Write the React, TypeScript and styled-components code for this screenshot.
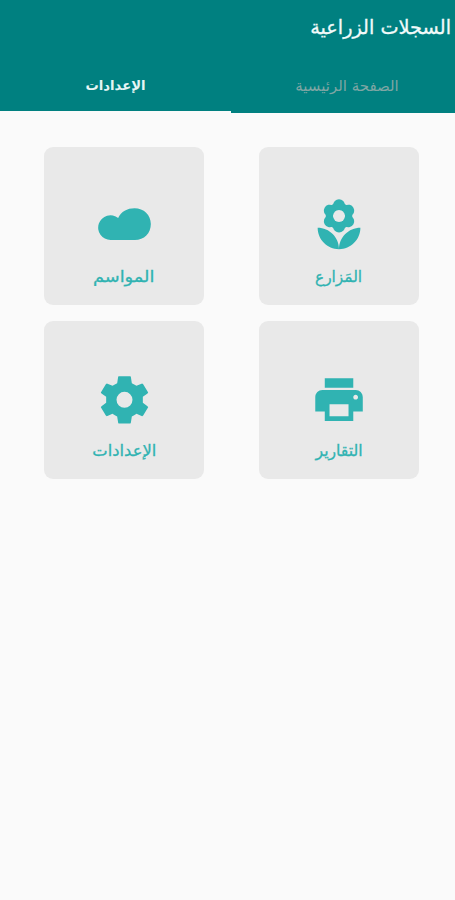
import React from 'react';
import styled, { createGlobalStyle } from 'styled-components';

const GlobalStyle = createGlobalStyle`
  * { box-sizing: border-box; }
  body { margin: 0; background: #fafafa; }
`;

const Page = styled.div`
  min-height: 900px;
  background: #fafafa;
  font-family: 'DejaVu Sans', sans-serif;
`;

const Header = styled.header`
  height: 113px;
  background: #008080;
  display: flex;
  flex-direction: column;
`;

const Title = styled.h1`
  margin: 0;
  height: 60px;
  padding: 0 4px 6px 0;
  display: flex;
  align-items: center;
  font-size: 19.3px;
  font-weight: 400;
  color: #f2fafa;
  -webkit-text-stroke: 0.3px #f2fafa;
  white-space: nowrap;
`;

const Tabs = styled.nav`
  flex: 1;
  display: grid;
  grid-template-columns: 216px 8px 231px;
`;

const Tab = styled.button<{ $active?: boolean }>`
  grid-column: ${p => (p.$active ? 3 : 1)};
  border: 0;
  background: none;
  padding: 0;
  display: flex;
  align-items: center;
  justify-content: center;
  font: ${p => (p.$active ? '700 13.2px' : '400 15px')} 'DejaVu Sans', sans-serif;
  color: ${p => (p.$active ? '#e6f5f5' : '#7fa6a4')};
  border-bottom: 2px solid ${p => (p.$active ? '#fafafa' : 'transparent')};
`;

const Grid = styled.main`
  display: grid;
  grid-template-columns: 160px 160px;
  grid-auto-rows: 158px;
  column-gap: 55px;
  row-gap: 16.5px;
  padding: 33.5px 36px 0 0;
`;

const Card = styled.div`
  background: #e9e9e9;
  border-radius: 9px;
  display: flex;
  flex-direction: column;
  align-items: center;
  color: #30b3b2;
`;

const IconBox = styled.div`
  height: 57px;
  margin-top: 49.5px;
  display: flex;
  align-items: center;
  justify-content: center;
  svg { display: block; fill: currentColor; }
`;

const Label = styled.span<{ $stretch: number }>`
  height: 24px;
  margin-top: 11.5px;
  line-height: 24px;
  font-size: 16px;
  white-space: nowrap;
  -webkit-text-stroke: 0.3px currentColor;
  transform: scaleX(${p => p.$stretch});
`;

const petals = [0, 60, 120, 180, 240, 300];

const Flower = () => (
  <svg width="57" height="57" viewBox="0.2 -0.4 24 24">
    <path d="M12 22c4.97 0 9-4.03 9-9-4.97 0-9 4.03-9 9zM3 13c0 4.97 4.03 9 9 9 0-4.97-4.03-9-9-9z" />
    <circle cx="12" cy="8" r="4.05" fill="none" stroke="currentColor" strokeWidth="3.1" />
    {petals.map(a => (
      <circle key={a} cx="12" cy="3.5" r="2.5" transform={`rotate(${a} 12 8)`} />
    ))}
    <circle cx="12" cy="8" r="2.5" fill="#e9e9e9" />
  </svg>
);

const Cloud = () => (
  <svg width="53" height="57" viewBox="0 0 158 171">
    <path d="M37 132A37 37 0 1 1 60 66C69 47 87 37 109 37C137 37 158 57 158 84C158 112 138 132 110 132Z" />
  </svg>
);

const Printer = () => (
  <svg width="57" height="57" viewBox="0.2 0 24 24">
    <path d="M19 8H5c-1.660 0-3 1.340-3 3v6h4v4h12v-4h4v-6c0-1.660-1.340-3-3-3zm-3 11H8v-5h8v5zm3-7c-.55 0-1-.45-1-1s.45-1 1-1 1 .45 1 1-.45 1-1 1zm-1-9H6v4h12V3z" />
  </svg>
);

const Gear = () => (
  <svg width="57" height="57" viewBox="-85.500 -86.500 171 171">
    <path
      fillRule="evenodd"
      d="M-17-71H17Q19-71 19-69L22-50Q29-47 36-42L53-49L56-47L71-22L69-19L55-9V9L69 19L71 22L56 47L53 49L36 42Q29 47 22 50L19 69Q19 71 17 71H-17Q-19 71-19 69L-22 50Q-29 47-36 42L-53 49L-56 47L-71 22L-69 19L-55 9V-9L-69-19L-71-22L-56-47L-53-49L-36-42Q-29-47-22-50L-19-69Q-19-71-17-71ZM0-24A24 24 0 1 0 0 24A24 24 0 1 0 0-24Z"
    />
  </svg>
);

const items = [
  { label: 'المَزارع', Icon: Flower, stretch: 0.96 },
  { label: 'المواسم', Icon: Cloud, stretch: 1.11 },
  { label: 'التقارير', Icon: Printer, stretch: 0.98 },
  { label: 'الإعدادات', Icon: Gear, stretch: 1.02 },
];

export default function App() {
  return (
    <Page dir="rtl" lang="ar">
      <GlobalStyle />
      <Header>
        <Title>السجلات الزراعية</Title>
        <Tabs>
          <Tab>الصفحة الرئيسية</Tab>
          <Tab $active>الإعدادات</Tab>
        </Tabs>
      </Header>
      <Grid>
        {items.map(({ label, Icon, stretch }) => (
          <Card key={label}>
            <IconBox><Icon /></IconBox>
            <Label $stretch={stretch}>{label}</Label>
          </Card>
        ))}
      </Grid>
    </Page>
  );
}
